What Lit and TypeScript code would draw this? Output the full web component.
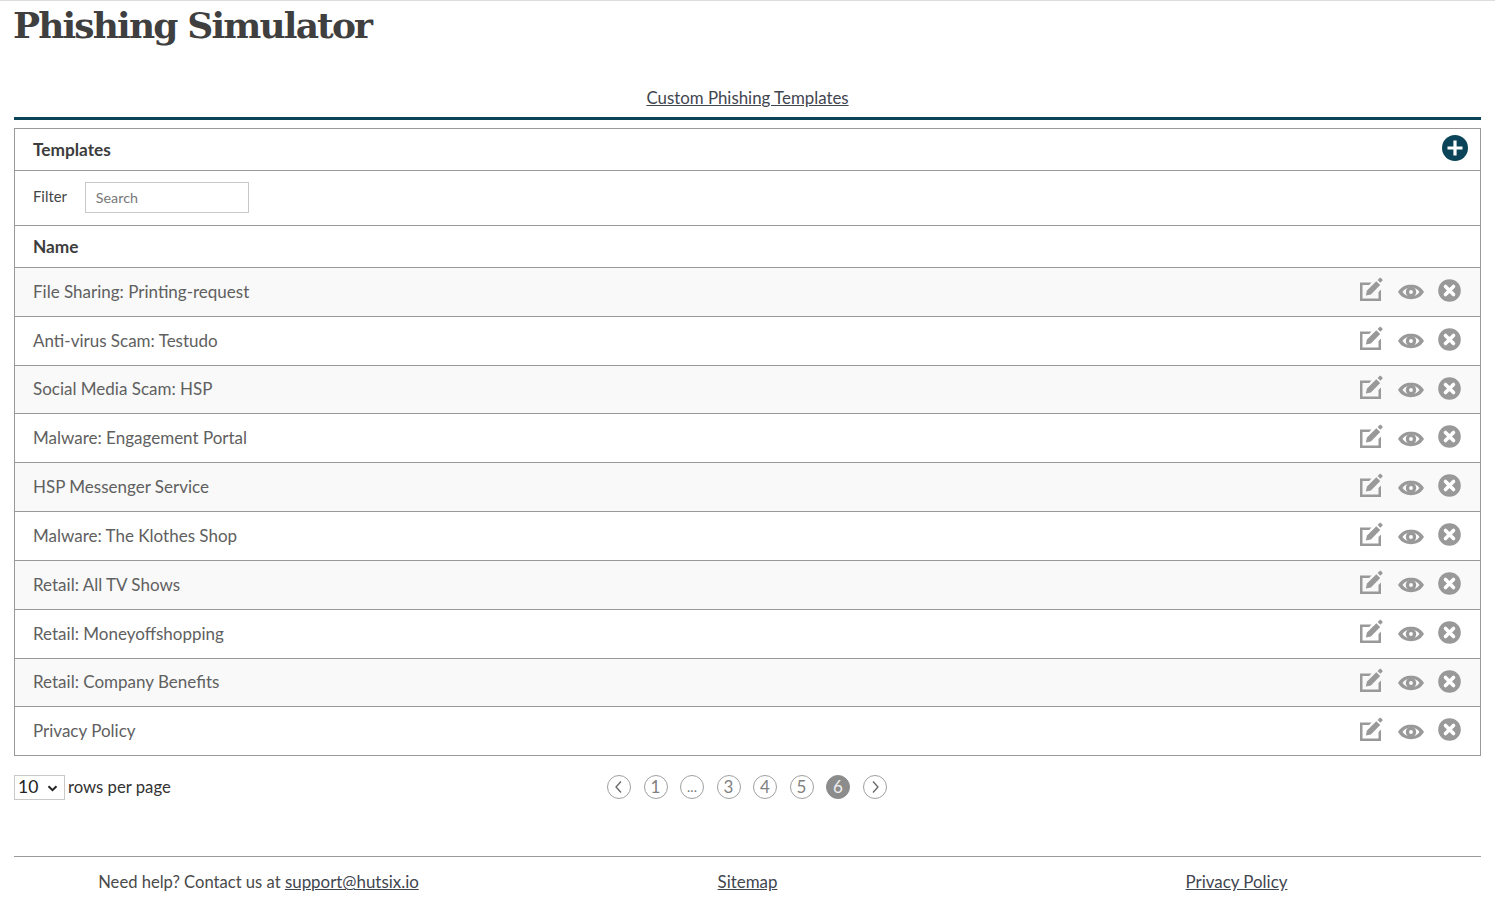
import { LitElement, html, css, svg } from "lit";
import { customElement } from "lit/decorators.js";

const names = [
  "File Sharing: Printing-request",
  "Anti-virus Scam: Testudo",
  "Social Media Scam: HSP",
  "Malware: Engagement Portal",
  "HSP Messenger Service",
  "Malware: The Klothes Shop",
  "Retail: All TV Shows",
  "Retail: Moneyoffshopping",
  "Retail: Company Benefits",
  "Privacy Policy",
];

const editIcon = svg`<svg class="i-edit" width="24" height="25" viewBox="0 0 24 25"><path d="M1 5.500h11.500L10.200 8H3.500v13.500h16V15l2.500-2.500V24H1z" fill="#999"/><path d="M6.800 18.500l1.200-5L17.300 4.200l3.900 3.900-9.300 9.300z" fill="#999"/><path d="M18.600 2.900l2.500-2.500 1.700 1.400 1 1.500-2.500 2.500z" fill="#999"/></svg>`;
const eyeIcon = svg`<svg class="eye" width="26" height="16" viewBox="0 0 26 16"><path fill-rule="evenodd" d="M0 8C3.500 2.600 8 .8 13 .8S22.500 2.600 26 8c-3.500 5.400-8 7.200-13 7.200S3.500 13.400 0 8zm13-4.400c-3.800 0-6.600 1.600-8.500 4.400 1.900 2.800 4.700 4.400 8.500 4.400s6.600-1.600 8.500-4.400C19.600 5.200 16.800 3.600 13 3.600z" fill="#999"/><path fill-rule="evenodd" d="M13 2.800a5.200 5.200 0 1 1 0 10.400 5.200 5.200 0 0 1 0-10.400zm0 3.300a1.900 1.900 0 1 0 0 3.800 1.900 1.900 0 0 0 0-3.800z" fill="#999"/></svg>`;
const closeIcon = svg`<svg width="23" height="23" viewBox="0 0 23 23"><circle cx="11.500" cy="11.500" r="11.300" fill="#999"/><path d="M7.500 7.500l8 8M15.500 7.500l-8 8" stroke="#fff" stroke-width="3.600" stroke-linecap="round"/></svg>`;

@customElement("app-root")
export class AppRoot extends LitElement {
  static styles = css`
    :host {
      display: block;
      font-family: Lato, "Liberation Sans", sans-serif;
      color: #4a4a4a;
      font-size: 17px;
      border-top: 1px solid #ddd;
      height: 897px;
      overflow: hidden;
      padding: 0 14px;
    }
    h1 {
      margin: 0 0 0 -1px;
      height: 61px;
      font-family: "DejaVu Serif", "Liberation Serif", serif;
      font-weight: 700;
      font-size: 36px;
      line-height: 48px;
      letter-spacing: -1.85px;
      color: #3f3f3f;
    }
    .tabs {
      height: 58px;
      border-bottom: 3px solid #0b4459;
      box-sizing: border-box;
      text-align: center;
      line-height: 72px;
      font-size: 16.850px;
    }
    a { color: #3f4650; text-decoration: underline; }
    .card {
      margin-top: 8px;
      border: 1px solid #999;
      border-bottom: 0;
    }
    .head {
      height: 41px;
      display: flex;
      align-items: center;
      justify-content: space-between;
      padding: 0 12px 0 18px;
      border-bottom: 1px solid #999;
      font-weight: 700;
      font-size: 17.300px;
      color: #3d3d3d;
    }
    .add { display: block; position: relative; top: -2px; }
    .filter {
      box-sizing: border-box;
      height: 55px;
      display: flex;
      align-items: center;
      padding: 0 0 2px 18px;
      gap: 18px;
      font-size: 14.800px;
      border-bottom: 1px solid #999;
      color: #444;
    }
    .lbl { position: relative; top: -1px; }
    .search {
      box-sizing: border-box;
      width: 164px;
      height: 31px;
      border: 1px solid #c8c8c8;
      padding: 0 10px;
      font: 14.300px Lato, sans-serif;
      color: #777;
      outline: none;
    }
    .search::placeholder { color: #777; opacity: 1; }
    .name-h {
      height: 41px;
      padding-left: 18px;
      display: flex;
      align-items: center;
      font-weight: 700;
      font-size: 17.300px;
      color: #3d3d3d;
      border-bottom: 1px solid #999;
    }
    .row {
      height: 47.840px;
      display: flex;
      align-items: center;
      justify-content: space-between;
      padding: 0 19px 0 18px;
      border-bottom: 1px solid #999;
      color: #606060;
    }
    .row:nth-child(odd) { background: #f9f9f9; }
    .nm { position: relative; top: -0.7px; }
    .acts { display: flex; align-items: center; gap: 15px; }
    .acts svg { display: block; }
    .acts .i-edit { position: relative; top: -2px; }
    .acts .eye { position: relative; top: 0.5px; }
    .acts .x { position: relative; top: -1.500px; margin-left: -1px; }
    .pager-row {
      position: relative;
      margin-top: 18px;
      height: 26px;
      display: flex;
      align-items: center;
      font-size: 16.700px;
    }
    .sel { position: relative; margin-right: 3px; height: 25px; }
    .sel svg { position: absolute; left: 33px; top: 10px; pointer-events: none; }
    select {
      appearance: none;
      display: block;
      width: 51px;
      height: 25px;
      border: 1px solid #c8c8c8;
      background: #fff;
      font: 17.500px Lato, sans-serif;
      color: #222;
      padding: 0 0 1px 3px;
      margin: 0;
      border-radius: 0;
    }
    .rpp { color: #333; }
    .pager {
      position: absolute;
      left: 593px;
      top: 1px;
      display: flex;
      gap: 12.500px;
    }
    .pg {
      box-sizing: border-box;
      width: 24px;
      height: 24px;
      border-radius: 50%;
      border: 1px solid #a0a0a0;
      display: flex;
      align-items: center;
      justify-content: center;
      color: #808080;
      font-size: 17px;
      padding-bottom: 1px;
    }
    .pg.small { font-size: 14px; }
    .pg.on { background: #8c8c8c; border-color: #8c8c8c; color: #eee; }
    footer {
      margin-top: 56px;
      border-top: 1px solid #999;
      display: grid;
      grid-template-columns: 1fr 1fr 1fr;
      height: 50px;
      line-height: 50px;
      font-size: 16.600px;
      color: #4a4a4a;
      text-align: center;
    }
    footer a { font-size: 16.900px; }
  `;

  render() {
    const chev = (d: string) => svg`<svg width="10" height="14" viewBox="0 0 10 14"><path d="${d}" fill="none" stroke="#666" stroke-width="1.300"/></svg>`;
    return html`
      <h1>Phishing Simulator</h1>
      <div class="tabs"><a href="#">Custom Phishing Templates</a></div>
      <div class="card">
        <div class="head">
          <span>Templates</span>
          <svg class="add" width="26" height="26" viewBox="0 0 26 26">
            <circle cx="13" cy="13" r="13" fill="#0b4459"></circle>
            <path d="M13 5.500v15M5.500 13h15" stroke="#fff" stroke-width="3.200"></path>
          </svg>
        </div>
        <div class="filter">
          <span class="lbl">Filter</span>
          <input class="search" placeholder="Search" />
        </div>
        <div class="name-h">Name</div>
        <div>
          ${names.map(
            (n) => html`<div class="row">
              <span class="nm">${n}</span>
              <span class="acts">${editIcon}${eyeIcon}<span class="x">${closeIcon}</span></span>
            </div>`
          )}
        </div>
      </div>
      <div class="pager-row">
        <span class="sel">
          <select><option>10</option></select>
          <svg width="11" height="7" viewBox="0 0 11 7"><path d="M1.500 1.200l4 4 4-4" fill="none" stroke="#222" stroke-width="2"></path></svg>
        </span>
        <span class="rpp">rows per page</span>
        <div class="pager">
          <span class="pg">${chev("M7 1.500L2 7l5 5.500")}</span>
          <span class="pg">1</span>
          <span class="pg small">...</span>
          <span class="pg">3</span>
          <span class="pg">4</span>
          <span class="pg">5</span>
          <span class="pg on">6</span>
          <span class="pg">${chev("M3 1.500L8 7l-5 5.500")}</span>
        </div>
      </div>
      <footer>
        <span>Need help? Contact us at <a href="#">support@hutsix.io</a></span>
        <span><a href="#">Sitemap</a></span>
        <span><a href="#">Privacy Policy</a></span>
      </footer>
    `;
  }
}
